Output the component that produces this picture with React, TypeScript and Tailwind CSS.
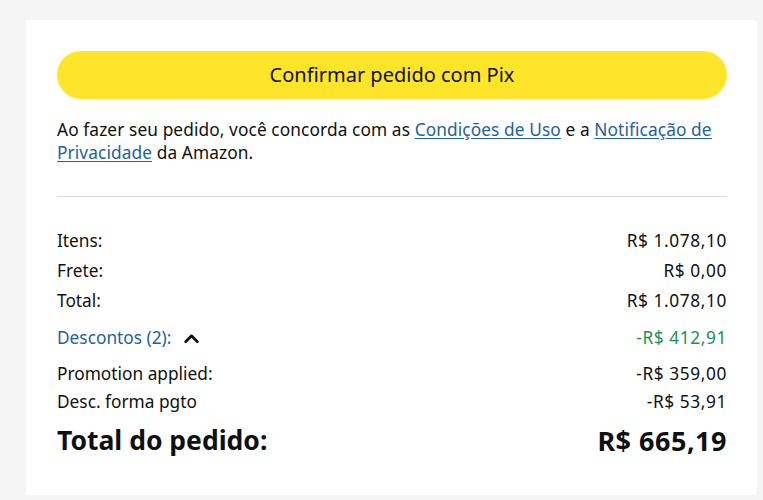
import React from 'react';

const FONT = { fontFamily: '"Noto Sans", "Open Sans", Arial, sans-serif' };

const ROWS = [
  { label: 'Itens:', value: 'R$ 1.078,10' },
  { label: 'Frete:', value: 'R$ 0,00' },
  { label: 'Total:', value: 'R$ 1.078,10' },
];

function ChevronUp() {
  return (
    <svg viewBox="0 0 16 16" className="w-[17px] h-[17px]" fill="none">
      <path d="M2.5 11 L8 5.5 L13.5 11" stroke="#0f1111" strokeWidth="2.6" strokeLinecap="round" strokeLinejoin="round" />
    </svg>
  );
}

export default function App() {
  return (
    <div className="w-full min-h-[500px] bg-[#f5f5f5] pt-[20px] pl-[26px] pr-[6px] pb-[5px]" style={FONT}>
      <div className="bg-white rounded-tr-[4px] h-[475px] pl-[31px] pr-[30px] pt-[31px] text-[#0f1111]">
        <button className="w-full h-[48px] rounded-full bg-[#ffe529] text-[20px] text-[#0f1111] flex items-center justify-center">
          Confirmar pedido com Pix
        </button>

        <p className="mt-[19px] text-[17.3px] leading-[23px] tracking-[0.1px]">
          Ao fazer seu pedido, você concorda com as{' '}
          <a className="text-[#2162a1] underline underline-offset-2">Condições de Uso</a> e a{' '}
          <a className="text-[#2162a1] underline underline-offset-2">Notificação de Privacidade</a> da Amazon.
        </p>

        <div className="mt-[32px] border-t border-[#d5d9d9]" />

        <div className="mt-[29px] text-[17.3px]">
          {ROWS.map((r) => (
            <div key={r.label} className="flex justify-between h-[30px] items-center">
              <span>{r.label}</span>
              <span className="tracking-[0.6px]">{r.value}</span>
            </div>
          ))}
          <div className="flex justify-between items-center h-[44px]">
            <span className="flex items-center gap-[12px] text-[#2162a1]">
              Descontos (2):
              <ChevronUp />
            </span>
            <span className="text-[#1f8f52] tracking-[0.6px]">-R$ 412,91</span>
          </div>
          <div className="flex justify-between items-center h-[28px]">
            <span>Promotion applied:</span>
            <span className="tracking-[0.6px]">-R$ 359,00</span>
          </div>
          <div className="flex justify-between items-center h-[28px]">
            <span>Desc. forma pgto</span>
            <span className="tracking-[0.6px]">-R$ 53,91</span>
          </div>
          <div className="flex justify-between items-center h-[50px] font-bold">
            <span className="text-[26.5px]">Total do pedido:</span>
            <span className="text-[27px] tracking-[0.5px]">R$ 665,19</span>
          </div>
        </div>
      </div>
    </div>
  );
}
